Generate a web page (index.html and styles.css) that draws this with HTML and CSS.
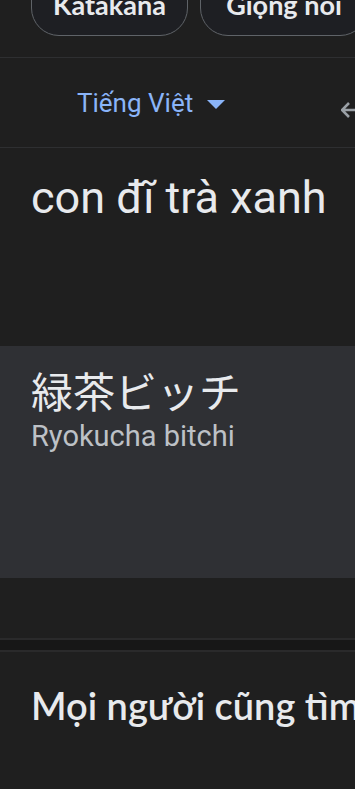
FILE: index.html
```html
<!DOCTYPE html>
<html lang="vi">
<head>
  <meta charset="UTF-8" />
  <meta name="viewport" content="width=device-width, initial-scale=1.0"/>
  <title>Dịch</title>
  <link rel="stylesheet" href="styles.css">
</head>
<body>
  <div class="chips">
    <button class="chip">Katakana</button>
    <button class="chip">Giọng nói</button>
  </div>

  <div class="lang-bar">
    <button class="lang-btn">
      Tiếng Việt
      <svg class="caret" width="18" height="10" viewBox="0 0 18 10"><path d="M0 0h18L9 9z" fill="#8ab4f8"/></svg>
    </button>
    <svg class="swap" width="20" height="20" viewBox="0 0 20 20">
      <path d="M8 3 1 10l7 7M1 10h19" fill="none" stroke="#9aa0a6" stroke-width="2.6"/>
    </svg>
  </div>

  <!-- source text -->
  <div class="input-box">con đĩ trà xanh</div>

  <!-- translation -->
  <div class="output-box">
    <div class="translated">緑茶ビッチ</div>
    <div class="romaji">Ryokucha bitchi</div>
  </div>

  <div class="spacer"></div>
  <div class="divider"></div>

  <h2 class="section-title">Mọi người cũng tìm kiếm</h2>
</body>
</html>
```

FILE: styles.css
```css
:root {
  --bg: #1f1f1f;
  --panel: #2f3034;
  --text: #e8eaed;
  --muted: #bdc1c6;
  --blue: #8ab4f8;
  --line: #2e2f31;
}

body {
  margin: 0;
  background: var(--bg);
  color: var(--text);
  font-family: Roboto, 'Noto Sans CJK JP', sans-serif;
  width: 355px;
  overflow: hidden;
}

.chips {
  display: flex;
  gap: 12px;
  padding-left: 31px;
  margin-top: -35px;
  height: 93px;
  white-space: nowrap;
  border-bottom: 1px solid var(--line);
  box-sizing: border-box;
}

.chip {
  flex: none;
  height: 71px;
  padding: 8px 0 0;
  border: 1.5px solid #5f6368;
  border-radius: 28px;
  background: #1e1f23;
  color: var(--text);
  font-family: Lato, sans-serif;
  font-size: 27px;
  font-weight: 700;
  line-height: 1;
  cursor: pointer;
}

.chip:first-child {
  width: 157px;
}

.chip:last-child {
  width: 168px;
}

.lang-bar {
  display: flex;
  align-items: center;
  height: 90px;
  border-bottom: 1px solid var(--line);
  box-sizing: border-box;
}

.lang-btn {
  display: flex;
  align-items: center;
  gap: 14px;
  margin-left: 77px;
  padding: 0;
  background: none;
  border: none;
  color: var(--blue);
  font-family: Roboto, sans-serif;
  font-size: 26px;
  cursor: pointer;
}

.caret {
  margin-top: 4px;
}

.swap {
  margin-left: auto;
  margin-right: -6px;
  margin-top: 14px;
}

.input-box {
  height: 198px;
  padding: 23px 0 0 31px;
  box-sizing: border-box;
  font-size: 45px;
  white-space: nowrap;
  color: var(--text);
}

.output-box {
  height: 232px;
  background: var(--panel);
  padding: 17px 31px 0;
  box-sizing: border-box;
}

.translated {
  font-family: 'Noto Sans CJK JP', sans-serif;
  font-size: 42px;
  line-height: 54px;
}

.romaji {
  color: var(--muted);
  font-size: 29px;
  line-height: 38px;
}

.spacer {
  height: 60px;
}

.divider {
  height: 14px;
  background: #171717;
  border-top: 2px solid #2a2a2b;
  border-bottom: 2px solid #2a2a2b;
  box-sizing: border-box;
}

.section-title {
  margin: 0;
  padding: 30px 31px 0;
  font-family: Lato, sans-serif;
  font-size: 38px;
  font-weight: 600;
  white-space: nowrap;
  color: var(--text);
}
```
